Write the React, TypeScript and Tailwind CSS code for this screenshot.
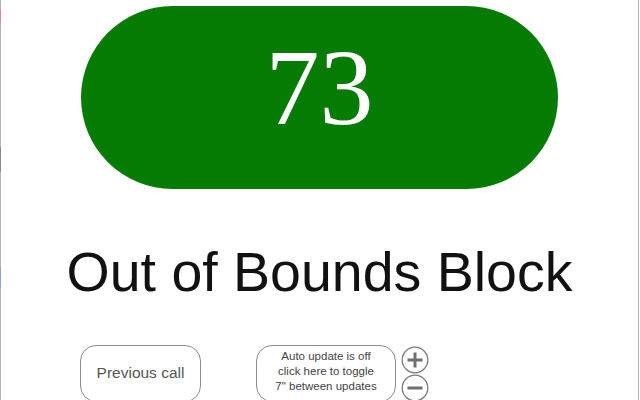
import React from 'react';

function RoundIcon({ minus }: { minus?: boolean }) {
    return (
        <svg width="28" height="28" viewBox="0 0 28 28" className="block">
            <circle cx="14" cy="14" r="12.8" fill="white" stroke="#7a7a7a" strokeWidth="1.3" />
            <line x1="6.5" y1="14" x2="21.5" y2="14" stroke="#6f6f6f" strokeWidth="3" />
            {!minus && <line x1="14" y1="6.5" x2="14" y2="21.5" stroke="#6f6f6f" strokeWidth="3" />}
        </svg>
    );
}

export default function App() {
    return (
        <div className="flex h-[400px] w-[640px] overflow-hidden bg-white" style={{ fontFamily: '"Liberation Sans", Arial, sans-serif' }}>
            {/* window edge on the left */}
            <div className="flex w-px flex-col bg-[#b4b4b4]">
                <div className="mt-[10px] h-[13px] bg-[#d88a8a]" />
                <div className="mt-[124px] h-[25px] bg-[#8a8a8a]" />
                <div className="mt-[95px] h-[20px] bg-[#8fa0d8]" />
            </div>

            <main className="flex flex-1 flex-col items-center pt-[6px]">
                <div className="flex h-[183px] w-[477px] shrink-0 justify-center rounded-full bg-[#067c05] pt-[28px]">
                    <span
                        className="text-[108px] leading-none text-white"
                        style={{ fontFamily: '"Liberation Serif", "Times New Roman", serif' }}
                    >
                        73
                    </span>
                </div>

                <h1 className="mt-[56px] text-[55.5px] leading-none text-[#111]">Out of Bounds Block</h1>

                <div className="mt-[44px] flex self-stretch pl-[79px]">
                    <button className="flex h-[57px] w-[121px] items-center justify-center rounded-[16px] border border-[#8c8c8c] text-[15.5px] text-[#555]">
                        Previous call
                    </button>
                    <button className="ml-[55px] flex h-[57px] w-[140px] items-center justify-center rounded-[16px] border border-[#8c8c8c] pb-[3px] text-center text-[11.5px] leading-[15px] text-[#444]">
                        Auto update is off<br />click here to toggle<br />7" between updates
                    </button>
                    <div className="ml-[5px] flex flex-col pt-px">
                        <RoundIcon />
                        <RoundIcon minus />
                    </div>
                </div>
            </main>

            <div className="w-px bg-[#b4b4b4]" />
            <div className="w-px bg-white" />
        </div>
    );
}
